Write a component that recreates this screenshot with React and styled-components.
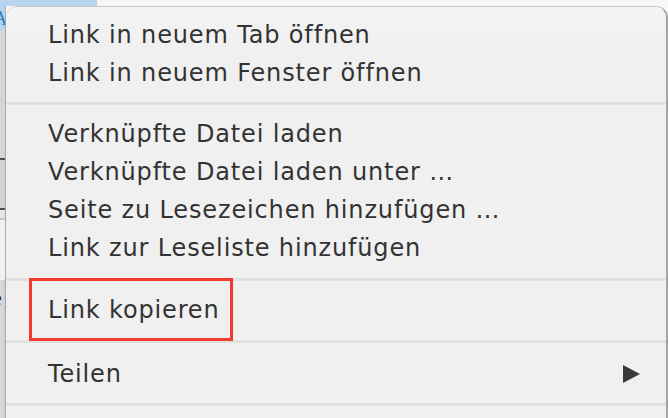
import styled, { createGlobalStyle } from "styled-components";

const GlobalStyle = createGlobalStyle`
  html, body {
    margin: 0;
    padding: 0;
    background: #f4f4f4;
  }
  body {
    font-family: "DejaVu Sans", "Liberation Sans", sans-serif;
    overflow: hidden;
  }
`;

const Page = styled.div`
  width: 668px;
  height: 418px;
  display: flex;
  flex-direction: column;
  overflow: hidden;
  background: #f7f7f7;
`;

const TopStrip = styled.div`
  height: 6px;
  display: flex;
`;

const Highlight = styled.div`
  width: 97px;
  background: #b7d5ef;
`;

const Body = styled.div`
  flex: 1;
  display: flex;
  min-height: 0;
`;

const Backdrop = styled.div`
  width: 5px;
  display: flex;
  flex-direction: column;
  background: linear-gradient(to right, #dcdcdc, #cfcfcf);
  border-right: 1px solid #a9a9a9;
`;

const Chunk = styled.div`
  height: ${(p) => p.$h}px;
  background: ${(p) => p.$bg || "transparent"};
  color: ${(p) => p.$color || "#222"};
  font-family: "Liberation Serif", serif;
  font-size: 22px;
  line-height: ${(p) => p.$h}px;
  overflow: hidden;
  white-space: nowrap;
  text-indent: -8px;
`;

const Menu = styled.div`
  flex: 1;
  display: flex;
  flex-direction: column;
  background: #f0f0f0;
  border-top: 1px solid #c4c4c4;
  border-right: 2px solid #a4a4a4;
  border-top-left-radius: 12px;
  border-top-right-radius: 12px;
  box-sizing: border-box;
  overflow: hidden;
`;

const Group = styled.div`
  display: flex;
  flex-direction: column;
  padding: ${(p) => p.$pad || "10px 0"};
  background: ${(p) => (p.$first ? "linear-gradient(#f3f4f5, #f0f0f0 40%)" : "transparent")};
`;

const Separator = styled.div`
  height: 3px;
  background: #e1e1e1;
`;

const Item = styled.div`
  position: relative;
  height: 38px;
  display: flex;
  align-items: center;
  justify-content: space-between;
  padding: 0 26px 0 42px;
  font-size: 24px;
  letter-spacing: 0.85px;
  color: #333333;
  white-space: nowrap;
`;

const Arrow = styled.span`
  width: 0;
  height: 0;
  border-top: 9px solid transparent;
  border-bottom: 9px solid transparent;
  border-left: 17px solid #3a3a3a;
`;

const Marker = styled.div`
  position: absolute;
  left: 23px;
  top: -13px;
  width: 204px;
  height: 63px;
  box-sizing: border-box;
  border: 3px solid #f23a2e;
  pointer-events: none;
`;

const groups = [
  { pad: "9px 0 10px", items: ["Link in neuem Tab öffnen", "Link in neuem Fenster öffnen"], first: true },
  {
    pad: "10px 0 11px",
    items: [
      "Verknüpfte Datei laden",
      "Verknüpfte Datei laden unter …",
      "Seite zu Lesezeichen hinzufügen …",
      "Link zur Leseliste hinzufügen",
    ],
  },
  { pad: "10px 0 11px", items: ["Link kopieren"], marked: true },
  { pad: "12px 0 10px", items: ["Teilen"], submenu: true },
];

export default function App() {
  return (
    <>
      <GlobalStyle />
      <Page>
        <TopStrip>
          <Highlight />
        </TopStrip>
        <Body>
          <Backdrop>
            <Chunk $h={24} $bg="#b7d5ef" $color="#2f7fc8">A</Chunk>
            <Chunk $h={128} $bg="#d6d6d6" />
            <Chunk $h={2} $bg="#4b5160" />
            <Chunk $h={48} $bg="#d2d2d2" />
            <Chunk $h={2} $bg="#4b5160" />
            <Chunk $h={8} $bg="#e6e6e6" />
            <Chunk $h={2} $bg="#c8c8c8" />
            <Chunk $h={60} $bg="#f2f2f2" />
            <Chunk $h={36}>e</Chunk>
            <Chunk $h={42}>I</Chunk>
          </Backdrop>
          <Menu>
            {groups.map((g, i) => (
              <div key={i}>
                {i > 0 && <Separator />}
                <Group $pad={g.pad} $first={g.first}>
                  {g.items.map((label) => (
                    <Item key={label}>
                      <span>{label}</span>
                      {g.submenu && <Arrow />}
                      {g.marked && <Marker />}
                    </Item>
                  ))}
                </Group>
              </div>
            ))}
            <Separator />
          </Menu>
        </Body>
      </Page>
    </>
  );
}
